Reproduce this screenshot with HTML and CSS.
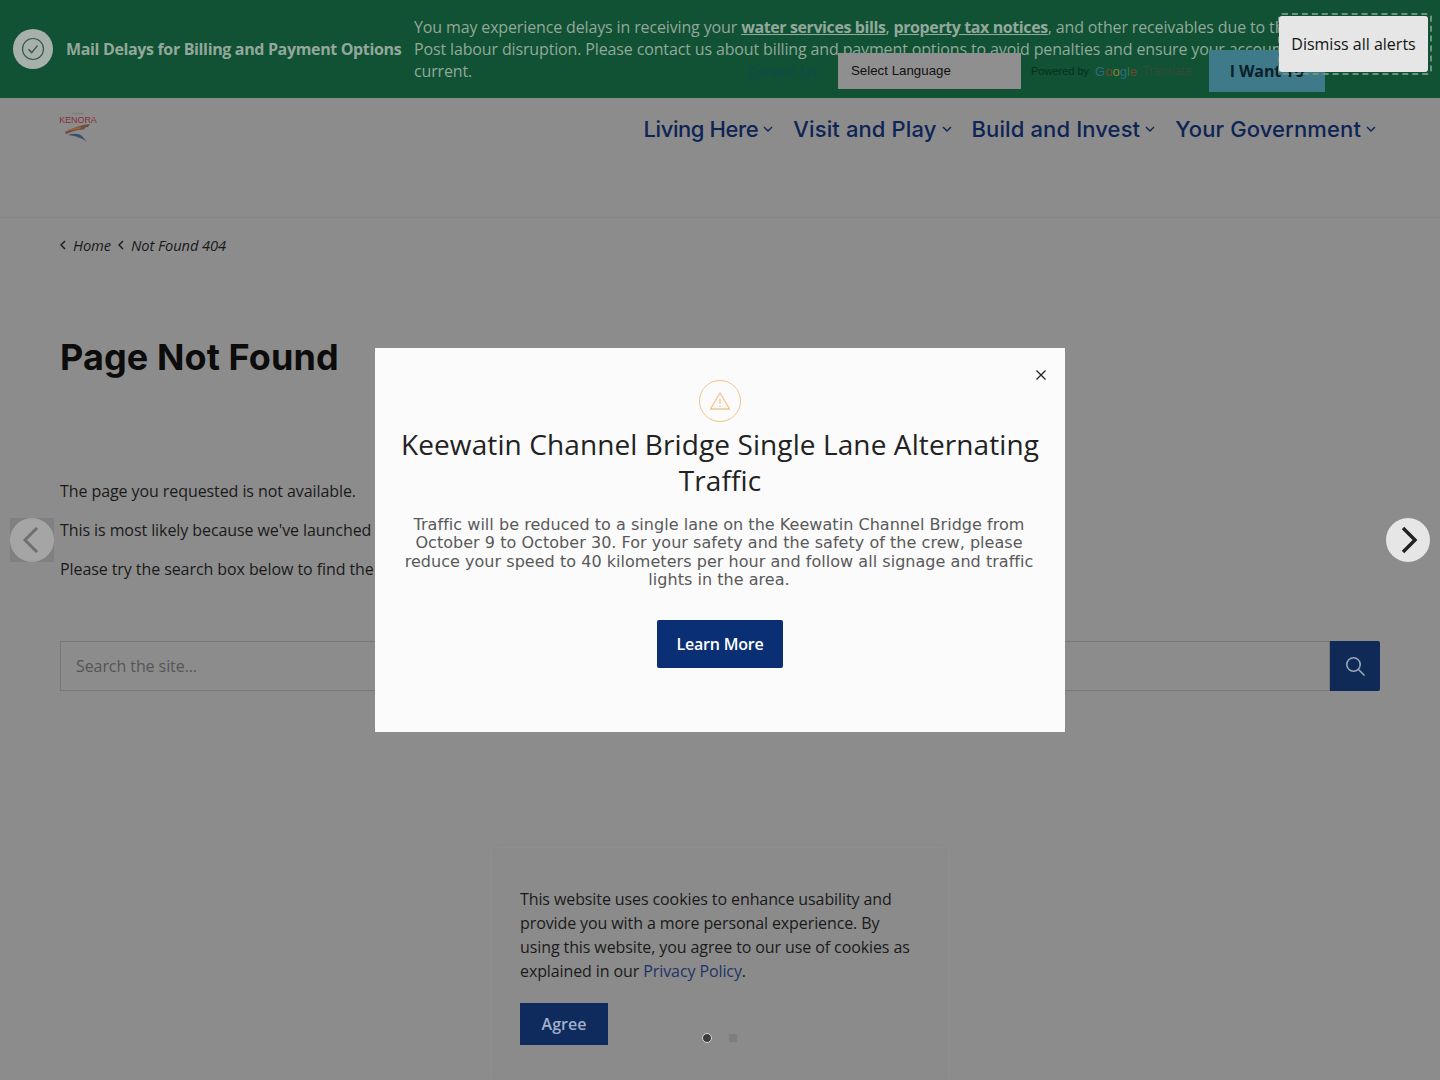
FILE: index.html
```html
<!DOCTYPE html>
<html lang="en">
<head>
  <meta charset="UTF-8">
  <meta name="viewport" content="width=device-width, initial-scale=1.0">
  <title>Page Not Found</title>
  <link rel="stylesheet" href="styles.css">
</head>
<body>
  <div class="alertBar">
    <div class="alertIcon">
      <svg width="26" height="26" viewBox="0 0 26 26" fill="none" stroke="#33594a" stroke-width="1.2">
        <circle cx="13" cy="13" r="10.5"/>
        <path d="M8.5 13.2l3.2 3.4 5.8-7" stroke-width="1.4"/>
      </svg>
    </div>
    <div class="alertTitle">Mail Delays for Billing and Payment Options</div>
    <div class="alertText">You may experience delays in receiving your <a href="#">water services bills</a>, <a href="#">property tax notices</a>, and other receivables due to the Canada Post labour disruption. Please contact us about billing and payment options to avoid penalties and ensure your account is current.</div>
  </div>

  <div class="utility">
    <a class="contactLink" href="#">Contact Us</a>
    <div class="langSelect">Select Language</div>
    <div class="poweredBy">Powered by<span class="googleWord"><span class="gBlue">G</span><span class="gRed">o</span><span class="gYellow">o</span><span class="gBlue">g</span><span class="gGreen">l</span><span class="gRed">e</span></span><span class="translate">Translate</span></div>
    <a class="wantButton" href="#">I Want To</a>
  </div>

  <div class="dismissFrame"><button class="dismissButton">Dismiss all alerts</button></div>

  <header class="siteHeader">
    <a class="logo" href="#">
      <svg width="38" height="32" viewBox="0 0 38 32">
        <path d="M13 2.500h12" stroke="#7f7f7f" stroke-width="1.500"/>
        <text x="19" y="12" text-anchor="middle" class="logoText">KENORA</text>
        <path d="M6 21c7-4 16-7 25-8l-2 3-3 .5-1 2c-6 0-12 2-18 4.500z" fill="#6b4e3c"/>
        <path d="M9 19c5-2 9-3 14-3l-2 2c-4 0-8 1-12 2z" fill="#a3603c"/>
        <path d="M9 24c6-2 11-1.500 14 1l5 6c-5-4-11-6-19-7z" fill="#34506d"/>
      </svg>
    </a>
    <nav class="mainNav">
      <a class="navFirst" href="#">Living Here<svg class="caret" width="10" height="6" viewBox="0 0 10 6"><path d="M1 1l4 4 4-4"/></svg></a>
      <a href="#">Visit and Play<svg class="caret" width="10" height="6" viewBox="0 0 10 6"><path d="M1 1l4 4 4-4"/></svg></a>
      <a href="#">Build and Invest<svg class="caret" width="10" height="6" viewBox="0 0 10 6"><path d="M1 1l4 4 4-4"/></svg></a>
      <a href="#">Your Government<svg class="caret" width="10" height="6" viewBox="0 0 10 6"><path d="M1 1l4 4 4-4"/></svg></a>
    </nav>
  </header>

  <main class="content">
    <div class="crumbs">
      <svg class="crumbArrow" width="6" height="10" viewBox="0 0 6 10"><path d="M5 1L1 5l4 4"/></svg><a href="#">Home</a>
      <svg class="crumbArrow" width="6" height="10" viewBox="0 0 6 10"><path d="M5 1L1 5l4 4"/></svg><a href="#">Not Found 404</a>
    </div>
    <h1>Page Not Found</h1>
    <p>The page you requested is not available.</p>
    <p>This is most likely because we've launched a new website.</p>
    <p>Please try the search box below to find the information you need.</p>
    <form class="searchForm">
      <div class="searchInput">Search the site...</div>
      <button class="searchButton" type="button">
        <svg width="22" height="22" viewBox="0 0 22 22" fill="none" stroke="#9aa5b8" stroke-width="1.6">
          <circle cx="9.5" cy="9.5" r="6.7"/>
          <path d="M14.5 14.5l6 6"/>
        </svg>
      </button>
    </form>
  </main>

  <div class="cookieBox">
    <p>This website uses cookies to enhance usability and provide you with a more personal experience. By using this website, you agree to our use of cookies as explained in our <a href="#">Privacy Policy</a>.</p>
    <button class="agreeButton">Agree</button>
  </div>

  <button class="slideArrow arrowLeft">
    <span class="arrowCircle">
      <svg width="24" height="30" viewBox="0 0 24 30" fill="none" stroke="#6f6f6f" stroke-width="3"><path d="M17 3L5 15l12 12"/></svg>
    </span>
  </button>
  <button class="slideArrow arrowRight">
    <span class="arrowCircle">
      <svg width="24" height="30" viewBox="0 0 24 30" fill="none" stroke="#222" stroke-width="3.4"><path d="M7 3l12 12L7 27"/></svg>
    </span>
  </button>

  <div class="dots">
    <span class="dot dotActive"></span>
    <span class="dot"></span>
  </div>

  <div class="modal">
    <button class="modalClose">
      <svg width="12" height="12" viewBox="0 0 12 12" stroke="#222" stroke-width="1.3"><path d="M1.5 1.5l9 9M10.5 1.5l-9 9"/></svg>
    </button>
    <div class="modalIcon">
      <svg width="22" height="20" viewBox="0 0 22 20" fill="none" stroke="#f2c48c" stroke-width="1.3" stroke-linejoin="round">
        <path d="M11 2L1.5 18h19z"/>
        <path d="M11 8v5M11 15v1"/>
      </svg>
    </div>
    <h2>Keewatin Channel Bridge Single Lane Alternating Traffic</h2>
    <p>Traffic will be reduced to a single lane on the Keewatin Channel Bridge from October 9 to October 30. For your safety and the safety of the crew, please reduce your speed to 40 kilometers per hour and follow all signage and traffic lights in the area.</p>
    <a class="learnMore" href="#">Learn More</a>
  </div>
</body>
</html>
```

FILE: styles.css
```css
html, body {
  height: 1080px;
  overflow: hidden;
}
body {
  background-color: #8c8c8c;
  color: #141414;
  font-family: 'Open Sans', sans-serif;
  font-size: 16px;
  letter-spacing: -0.08px;
  margin: 0;
  padding: 0;
  position: relative;
}
a {
  color: inherit;
  text-decoration: none;
}
button {
  border: none;
  padding: 0;
  cursor: pointer;
}

/* alert bar */
.alertBar {
  display: flex;
  align-items: center;
  height: 98px;
  box-sizing: border-box;
  padding-left: 13px;
  background-color: #105233;
  color: #93a89c;
}
.alertIcon {
  display: flex;
  align-items: center;
  justify-content: center;
  flex: none;
  width: 40px;
  height: 40px;
  border-radius: 50%;
  background-color: #a8b0ab;
}
.alertTitle {
  flex: none;
  width: 348px;
  margin-left: 13px;
  font-size: 16px;
  font-weight: 700;
  letter-spacing: -0.35px;
  white-space: nowrap;
}
.alertText {
  width: 945px;
  line-height: 22px;
  font-size: 16px;
  letter-spacing: -0.14px;
}
.alertText a {
  font-weight: 700;
  letter-spacing: -0.4px;
  text-decoration: underline;
}

/* google translate row and button, sit over the alert */
.utility {
  position: absolute;
  top: 50px;
  left: 747px;
  width: 578px;
  height: 42px;
  display: flex;
  align-items: center;
}
.contactLink {
  width: 91px;
  flex: none;
  color: #0f4a52;
  font-size: 14px;
}
.langSelect {
  flex: none;
  box-sizing: border-box;
  width: 183px;
  height: 36px;
  padding-left: 13px;
  line-height: 36px;
  background-color: #8f8f8f;
  font-family: 'Liberation Sans', sans-serif;
  font-size: 13.3px;
  letter-spacing: 0;
  color: #111;
}
.poweredBy {
  display: flex;
  align-items: center;
  flex: none;
  width: 178px;
  margin-left: 10px;
  font-family: 'Liberation Sans', sans-serif;
  font-size: 11px;
  letter-spacing: 0;
  color: #07301c;
  white-space: nowrap;
}
.googleWord {
  margin-left: 6px;
  font-size: 13px;
}
.translate {
  margin-left: 5px;
  font-size: 12px;
  color: #344a3a;
}
.gBlue { color: #2c6a80; }
.gRed { color: #7a4432; }
.gYellow { color: #85843a; }
.gGreen { color: #2c7a4a; }
.wantButton {
  flex: none;
  width: 116px;
  height: 42px;
  line-height: 42px;
  text-align: center;
  background-color: #3f7a8a;
  color: #0a1f28;
  font-weight: 700;
  font-size: 16px;
}
.dismissFrame {
  position: absolute;
  top: 13px;
  left: 1278px;
  width: 150px;
  height: 58px;
  border: 2px dashed #6f9080;
  border-radius: 4px;
}
.dismissButton {
  display: block;
  width: 149px;
  height: 56px;
  margin-top: 1px;
  margin-left: -1px;
  border-radius: 3px;
  background-color: #e6e6e6;
  color: #141414;
  font-family: 'Open Sans', sans-serif;
  font-size: 16px;
}

/* header */
.siteHeader {
  display: flex;
  justify-content: space-between;
  height: 120px;
  box-sizing: border-box;
  padding: 13px 64px 0 59px;
  border-bottom: 1px solid #858585;
}
.logoText {
  font-family: 'Liberation Sans', sans-serif;
  font-size: 9px;
  fill: #84303a;
}
.mainNav {
  display: flex;
  gap: 20px;
  padding-top: 2px;
  color: #0e2455;
  font-family: 'Inter', sans-serif;
  font-size: 22px;
  font-weight: 500;
  letter-spacing: 0.12px;
}
.mainNav a {
  display: flex;
  align-items: center;
  height: 32px;
}
.mainNav .navFirst {
  letter-spacing: -0.4px;
}
.caret {
  margin-left: 5px;
  fill: none;
  stroke: #0e2455;
  stroke-width: 1.4;
}

/* page content */
.content {
  padding: 0 60px;
}
.crumbs {
  display: flex;
  align-items: center;
  height: 20px;
  margin-top: 17px;
  font-size: 14.7px;
  font-style: italic;
  color: #1a1a1a;
}
.crumbArrow {
  margin-right: 7px;
  fill: none;
  stroke: #1a1a1a;
  stroke-width: 1.4;
}
.crumbs a {
  margin-right: 7px;
}
h1 {
  margin: 80px 0 101px;
  font-family: 'Inter', sans-serif;
  font-size: 36px;
  line-height: 44px;
  font-weight: 700;
  letter-spacing: 0.1px;
  color: #0c0c0c;
}
.content p {
  margin: 0 0 17px;
  line-height: 22px;
  color: #1a1a1a;
}
.searchForm {
  display: flex;
  margin-top: 61px;
  height: 50px;
}
.searchInput {
  flex: 1;
  box-sizing: border-box;
  padding-left: 15px;
  line-height: 48px;
  border: 1px solid #777777;
  color: #555555;
}
.searchButton {
  display: flex;
  align-items: center;
  justify-content: center;
  width: 50px;
  background-color: #0f2a57;
  border-radius: 0 2px 2px 0;
}

/* cookie notice */
.cookieBox {
  position: absolute;
  left: 492px;
  top: 848px;
  width: 456px;
  height: 232px;
  box-sizing: border-box;
  padding: 39px 28px 0;
  background-color: #8b8b8b;
  box-shadow: 0 0 4px #909090;
  letter-spacing: -0.1px;
}
.cookieBox p {
  margin: 0 0 20px;
  line-height: 24px;
  font-size: 16px;
  color: #1a1a1a;
}
.cookieBox a {
  color: #1f3366;
}
.agreeButton {
  display: block;
  width: 88px;
  height: 42px;
  background-color: #0f2a5c;
  color: #9fb0c9;
  font-family: 'Open Sans', sans-serif;
  font-size: 16px;
  font-weight: 600;
}

/* slider bits */
.slideArrow {
  position: absolute;
  top: 518px;
  width: 44px;
  height: 44px;
  background: none;
}
.arrowCircle {
  display: flex;
  align-items: center;
  justify-content: center;
  height: 100%;
  border-radius: 50%;
}
.arrowLeft {
  left: 10px;
  background-color: #808080;
}
.arrowLeft .arrowCircle {
  background-color: #a5a5a5;
}
.arrowRight {
  left: 1386px;
}
.arrowRight .arrowCircle {
  background-color: #e6e6e6;
}
.dots {
  position: absolute;
  top: 1033px;
  left: 702px;
  display: flex;
  gap: 16px;
}
.dot {
  box-sizing: border-box;
  width: 10px;
  height: 10px;
  border-radius: 2px;
  background-color: #7e7e7e;
  border: 1px solid #8a8a8a;
}
.dotActive {
  border-radius: 50%;
  background-color: #3c3c3c;
  border: 1.5px solid #d9d9d9;
}

/* modal */
.modal {
  position: absolute;
  left: 375px;
  top: 348px;
  width: 690px;
  height: 384px;
  box-sizing: border-box;
  padding-top: 32px;
  background-color: #fbfbfb;
  text-align: center;
  letter-spacing: normal;
}
.modalClose {
  position: absolute;
  top: 21px;
  right: 18px;
  display: flex;
  width: 12px;
  height: 12px;
  background: none;
}
.modalIcon {
  display: flex;
  align-items: center;
  justify-content: center;
  box-sizing: border-box;
  width: 42px;
  height: 42px;
  margin: 0 auto;
  border: 1px solid #f2c48c;
  border-radius: 50%;
}
.modal h2 {
  margin: 4px 22px 0;
  font-size: 28px;
  line-height: 36px;
  font-weight: 400;
  letter-spacing: 0.1px;
  color: #222222;
}
.modal p {
  margin: 18px 28px 0 26px;
  font-family: 'DejaVu Sans', sans-serif;
  font-size: 16px;
  line-height: 18.4px;
  letter-spacing: 0.04px;
  color: #595959;
}
.learnMore {
  display: block;
  width: 126px;
  height: 48px;
  margin: 30px auto 0;
  line-height: 48px;
  border-radius: 2px;
  background-color: #0a2f75;
  color: #ffffff;
  font-size: 16px;
  font-weight: 600;
  letter-spacing: -0.2px;
}
```
